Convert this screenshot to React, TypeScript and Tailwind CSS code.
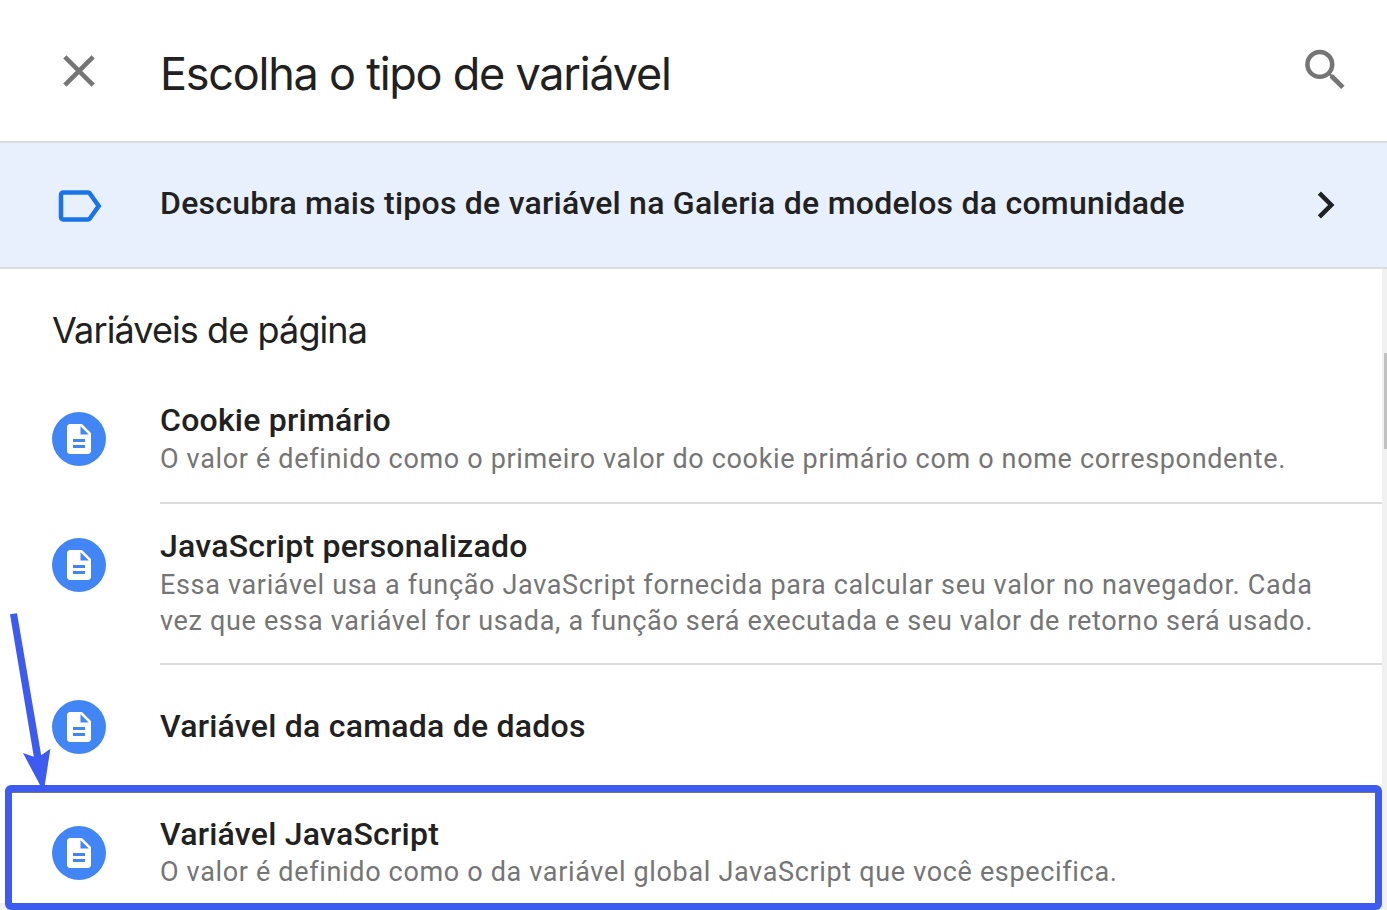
import React from "react";

function DocIcon() {
  return (
    <div className="flex h-[54px] w-[54px] shrink-0 items-center justify-center rounded-full bg-[#4285f4]">
      <svg width="36" height="36" viewBox="0 0 24 24" fill="#fff">
        <path d="M14 2H6c-1.1 0-1.99.9-1.99 2L4 20c0 1.1.89 2 1.99 2H18c1.1 0 2-.9 2-2V8l-6-6zm2 16H8v-2h8v2zm0-4H8v-2h8v2zm-3-5V3.5L18.5 9H13z" />
      </svg>
    </div>
  );
}

type RowProps = {
  title: string;
  lines: string[];
  className: string;
  iconClass: string;
  textClass: string;
};

function Row({ title, lines, className, iconClass, textClass }: RowProps) {
  return (
    <div className={`flex pl-[52px] ${className}`}>
      <div className={`w-[108px] shrink-0 ${iconClass}`}>
        <DocIcon />
      </div>
      <div className={`flex grow flex-col whitespace-nowrap ${textClass}`}>
        <h3 className="text-[32px] leading-[40px] font-medium tracking-[0.24px] text-[#212121]">{title}</h3>
        <div>
          {lines.map((line) => (
            <p key={line} className="text-[27px] leading-[36px] tracking-[0.665px] text-[#757575]">{line}</p>
          ))}
        </div>
      </div>
    </div>
  );
}

export default function App() {
  return (
    <div className="relative flex h-[910px] w-[1387px] flex-col overflow-hidden bg-white font-[Roboto,sans-serif] text-[#212121]">
      <header className="flex h-[143px] shrink-0 items-center border-b-2 border-[#dadce0] pr-[35px] pl-[52px]">
        <svg width="54" height="54" viewBox="0 0 24 24" fill="#757575">
          <path d="M19 6.41L17.59 5 12 10.59 6.41 5 5 6.41 10.59 12 5 17.59 6.41 19 12 13.41 17.59 19 19 17.59 13.41 12z" />
        </svg>
        <h1 className="ml-[54px] grow pt-[6px] font-[Inter,sans-serif] text-[45px] tracking-[-1.24px]">Escolha o tipo de variável</h1>
        <svg className="mb-[2px]" width="54" height="54" viewBox="-0.2 0 24 24" fill="#757575">
          <path d="M15.5 14h-.79l-.28-.27A6.471 6.471 0 0 0 16 9.5 6.5 6.5 0 1 0 9.5 16c1.61 0 3.09-.59 4.23-1.57l.27.28v.79l5 4.99L20.49 19l-4.99-5zm-6 0C7.01 14 5 11.99 5 9.5S7.01 5 9.5 5 14 7.01 14 9.5 11.99 14 9.5 14z" />
        </svg>
      </header>
      <div className="flex h-[126px] shrink-0 items-center border-b-2 border-[#dadce0] bg-[#e8f0fe] pr-[35px] pl-[52px]">
        <svg className="mt-[2px]" width="54" height="54" viewBox="0 0 24 24" fill="#1a73e8">
          <path d="M17.63 5.84C17.27 5.33 16.67 5 16 5L5 5.01C3.9 5.01 3 5.9 3 7v10c0 1.1.9 1.99 2 1.99L16 19c.67 0 1.27-.33 1.63-.84L22 12l-4.37-6.16zM16 17H5V7h11l3.55 5L16 17z" />
        </svg>
        <h2 className="ml-[54px] grow pb-[4px] text-[32px] font-medium tracking-[0.24px]">Descubra mais tipos de variável na Galeria de modelos da comunidade</h2>
        <svg width="54" height="54" viewBox="-0.2 0 24 24" fill="#202124">
          <path d="M8.59 16.59L13.17 12 8.59 7.41 10 6l6 6-6 6z" />
        </svg>
      </div>
      <main className="flex grow">
        <div className="w-[1382px]">
          <h2 className="h-[109px] pt-[37px] pl-[52px] font-[Inter,sans-serif] text-[36px] leading-[48px] tracking-[-0.9px]">Variáveis de página</h2>
          <Row
            className="h-[126px]"
            iconClass="pt-[34px]"
            textClass="gap-px border-b-2 border-[#dadce0] pt-[22px]"
            title="Cookie primário"
            lines={["O valor é definido como o primeiro valor do cookie primário com o nome correspondente."]}
          />
          <Row
            className="h-[161px]"
            iconClass="pt-[34px]"
            textClass="gap-px border-b-2 border-[#dadce0] pt-[22px]"
            title="JavaScript personalizado"
            lines={[
              "Essa variável usa a função JavaScript fornecida para calcular seu valor no navegador. Cada",
              "vez que essa variável for usada, a função será executada e seu valor de retorno será usado.",
            ]}
          />
          <Row
            className="h-[128px]"
            iconClass="pt-[35px]"
            textClass="pt-[41px]"
            title="Variável da camada de dados"
            lines={[]}
          />
          <Row
            className="h-[110px]"
            iconClass="pt-[33px]"
            textClass="pt-[21px]"
            title="Variável JavaScript"
            lines={["O valor é definido como o da variável global JavaScript que você especifica."]}
          />
          <div className="h-[7px] bg-[#f1f1f1]" />
        </div>
        <div className="w-[5px] bg-[#f1f1f1] pt-[84px]">
          <div className="ml-[2px] h-[96px] bg-[#c1c1c1]" />
        </div>
      </main>
      <div className="absolute top-[785px] left-[5px] h-[125px] w-[1377px] rounded-[6px] border-[7px] border-[#3d5af1]">
        <div className="h-px bg-[#757575]" />
      </div>
      <svg className="absolute top-[600px] left-0" width="70" height="200" fill="#3d5af1">
        <path d="M10 14.3L17 13.2L41.2 155.3L50.4 148.7L43.7 192L23 153L33.8 156.7Z" />
      </svg>
    </div>
  );
}
